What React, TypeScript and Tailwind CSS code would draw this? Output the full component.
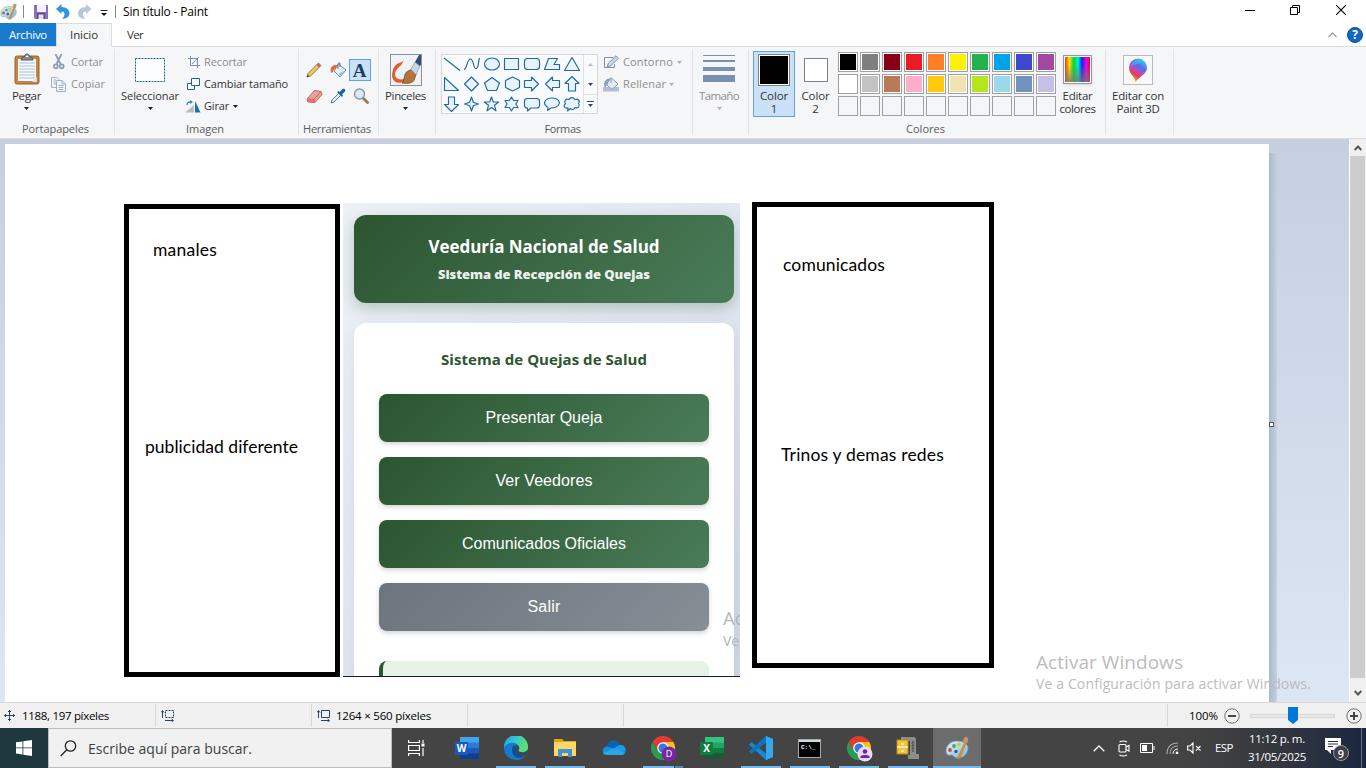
import { useLayoutEffect, useRef, type ReactNode } from "react";

/* Single line of text whose tracking is adjusted so that it fills a given width. */
function Fit({ w, children, className = "" }: { w: number; children: string; className?: string }) {
  const ref = useRef<HTMLSpanElement>(null);
  useLayoutEffect(() => {
    const el = ref.current;
    if (!el) return;
    el.style.letterSpacing = "0px";
    const natural = el.getBoundingClientRect().width;
    el.style.letterSpacing = `${(w - natural) / children.length}px`;
  }, [w, children]);
  return (
    <span ref={ref} className={`inline-block shrink-0 whitespace-nowrap ${className}`}>
      {children}
    </span>
  );
}

function Caret({ className = "text-[#1e1e1e]" }: { className?: string }) {
  return (
    <svg width="5" height="3" viewBox="0 0 5 3" className={`shrink-0 ${className}`}>
      <path d="M0 0H5L2.5 3Z" fill="currentColor" />
    </svg>
  );
}

function Group({ label, labelWidth, className, children }: { label?: string; labelWidth?: number; className: string; children: ReactNode }) {
  return (
    <section className={`flex h-[91px] shrink-0 flex-col ${className}`}>
      <div className="flex h-[72px]">{children}</div>
      <div className="flex h-[19px] items-center justify-center pr-[3px] text-[11px] leading-[19px] text-[#5a5a5a]">
        {label && <Fit w={labelWidth ?? 60}>{label}</Fit>}
      </div>
    </section>
  );
}

function Divider() {
  return <div className="mt-[2px] h-[86px] w-px shrink-0 bg-[#e2e3e4]" />;
}

function PaletteIcon({ size }: { size: number }) {
  return (
    <svg width={size} height={size} viewBox="0 0 24 24" className="shrink-0">
      <defs>
        <linearGradient id="pal" x1="0" y1="0" x2="1" y2="1">
          <stop offset="0" stopColor="#e6f5fd" />
          <stop offset="1" stopColor="#74b9de" />
        </linearGradient>
      </defs>
      <path d="M12 5C5 5 1 10 1 15c0 4 3 5 5 4 2-1 2 3 7 3 6 0 10-5 10-10 0-4-4-7-11-7Z" fill="url(#pal)" stroke="#5d9cc3" strokeWidth=".7" />
      <circle cx="5" cy="14" r="1.9" fill="#e04438" />
      <circle cx="9" cy="10" r="1.9" fill="#4cae45" />
      <circle cx="14" cy="8.5" r="1.9" fill="#f2bd2b" />
      <circle cx="11" cy="15.5" r="1.7" fill="#3d5c72" />
      <path d="M19.8 6 21 7.5 15 22.5 12.5 23.5 13 21Z" fill="#e88b2d" stroke="#b46a1e" strokeWidth=".4" />
      <path d="M18.5 6.5C17 3 20 2 20.5.5c1 1 1.8 1.4 3 1.3C22.5 4 24 6 21.5 7.5Z" fill="#c69766" />
    </svg>
  );
}

function TitleBar() {
  return (
    <header className="flex h-[23px] shrink-0 items-center bg-white">
      <div className="flex w-[17px]"><PaletteIcon size={17} /></div>
      <div className="ml-[6px] h-[13px] w-px bg-[#8a8a8a]" />
      <svg width="14" height="14" viewBox="0 0 14 14" className="ml-[10px]">
        <path d="M0 0H14V14H1L0 13Z" fill="#8a6fc0" />
        <rect x="3" width="9" height="7" fill="#f4f2fa" />
        <path d="M3 8H11V14H3Z" fill="#5a4a86" /><rect x="4.5" y="9.5" width="5" height="4.5" fill="#e4def2" />
      </svg>
      <svg width="14" height="15" viewBox="0 0 14 15" className="ml-[8px]">
        <path d="M0 5 5.500 0V3C11 3 13.500 6 13.500 9.500S10 14.600 6 15C9 12.500 10 7.300 5.500 7.500V10Z" fill="#2f97e0" />
      </svg>
      <svg width="14" height="15" viewBox="0 0 14 15" className="ml-[8px]">
        <path d="M13.500 5 8 0V3C2.500 3 0 6 0 9.500S3.500 14.600 7.500 15C4.500 12.500 3.500 7.300 8 7.500V10Z" fill="#b7c6d9" />
      </svg>
      <svg width="8" height="7" viewBox="0 0 8 7" className="ml-[8px] mt-[3px]">
        <path d="M.5.5H7.500" stroke="#222" /><path d="M1 3H7L4 6Z" fill="#111" />
      </svg>
      <div className="ml-[7px] h-[13px] w-px bg-[#8a8a8a]" />
      <Fit w={85} className="ml-[7px] text-[12px] text-black">Sin título - Paint</Fit>
      <div className="ml-auto flex h-full items-center">
        <svg width="10" height="11" viewBox="0 0 10 11" className="mr-[35px] mt-[-2px]"><path d="M0 5.500H10" stroke="#000" /></svg>
        <svg width="10" height="10" viewBox="0 0 10 10" className="mr-[36px] mt-[-3px]">
          <path d="M.5 2.500H7.500V9.500H.5ZM2.500 2.500V.5H9.500V7.500H7.500" fill="none" stroke="#000" />
        </svg>
        <svg width="10" height="10" viewBox="0 0 10 10" className="mr-[20px] mt-[-3px]"><path d="M0 0 10 10M10 0 0 10" stroke="#000" strokeWidth="1.100" /></svg>
      </div>
    </header>
  );
}

function TabBar() {
  return (
    <nav className="flex h-6 shrink-0 border-b border-[#dadbdc] bg-white text-[11.500px]">
      <div className="flex h-[23px] w-14 items-center justify-center bg-[#1979ca] text-white"><Fit w={38}>Archivo</Fit></div>
      <div className="flex h-6 w-14 items-center justify-center border-x border-t border-[#dadbdc] bg-[#f5f6f7] pb-[2px] text-[#333]"><Fit w={28}>Inicio</Fit></div>
      <div className="flex h-[23px] w-[46px] items-center justify-center text-[#333]"><Fit w={16}>Ver</Fit></div>
      <div className="ml-auto flex h-[23px] items-center">
        <svg width="9" height="6" viewBox="0 0 9 6" className="mr-[10px]"><path d="M.5 5 4.500 1 8.500 5" fill="none" stroke="#a0a0a0" strokeWidth="1.400" /></svg>
        <span className="mr-[3px] flex size-4 items-center justify-center rounded-full border border-[#0d4f93] bg-[#0f68c3] text-[12px] font-bold leading-none text-white">?</span>
      </div>
    </nav>
  );
}

function ClipboardGroup() {
  return (
    <Group label="Portapapeles" labelWidth={67} className="w-[114px]">
      <div className="flex w-[53px] flex-col items-center pt-[6px]">
        <svg width="26" height="32" viewBox="0 0 26 32" className="ml-[1px]">
          <rect x="1" y="3" width="24" height="28" rx="2" fill="#c58440" stroke="#9a622b" />
          <path d="M4 6H22V28H4Z" fill="#f7fafc" />
          <path d="M5 10H21M5 13H21M5 16H21M5 19H21M5 22H21M5 25H21" stroke="#a9c0d2" />
          <path d="M7 7 8.500 4H10.500C10.500 0 15.500 0 15.500 4H17.500L19 7Z" fill="#888f96" stroke="#4f565c" />
          <path d="M11.500 4a1.500 1.500 0 0 1 3 0" fill="#fff" />
          <path d="M18 29 23 24V29Z" fill="#d7dee3" />
        </svg>
        <Fit w={29} className="mt-[3px] text-[11.500px] leading-4 text-[#333]">Pegar</Fit>
        <Caret className="mt-[3px] text-[#1e1e1e]" />
      </div>
      <div className="-ml-px flex flex-col pt-[4px] text-[11px] text-[#8d8d8d]">
        <div className="flex h-[22px] items-center">
          <svg width="12" height="16" viewBox="0 0 12 16" className="ml-[1px] mr-[6px]" fill="none" stroke="#8c9ab4" strokeWidth="1.700">
            <path d="M2.500 0 7.500 10M8.500 0 3.500 10" /><circle cx="2.800" cy="12.300" r="2" /><circle cx="8.700" cy="12.300" r="2" />
          </svg>
          <Fit w={32}>Cortar</Fit>
        </div>
        <div className="flex h-[22px] items-center">
          <svg width="15" height="15" viewBox="0 0 15 15" className="mr-[5px] -ml-px" fill="#f3f5f9" stroke="#a4b0c6">
            <path d="M.5.5H6L8.500 3V10.500H.5ZM2.500 3H5M2.500 5H6.500M2.500 7H6.500" /><path d="M5.500 3.500H11L14.500 7V14.500H5.500ZM11 3.500V7H14.500M7.500 8.500H12.500M7.500 10.500H12.500M7.500 12.500H12.500" />
          </svg>
          <Fit w={34}>Copiar</Fit>
        </div>
      </div>
    </Group>
  );
}

function ImageGroup() {
  return (
    <Group label="Imagen" labelWidth={38} className="w-[183px]">
      <div className="flex w-[70px] flex-col items-center pt-[11px]">
        <svg width="30" height="24" viewBox="0 0 30 24"><rect x=".5" y=".5" width="29" height="23" fill="#fbfdfe" stroke="#1d5f9e" strokeDasharray="2 1" /></svg>
        <Fit w={58} className="mt-[6px] text-[11px] leading-4 text-[#333]">Seleccionar</Fit>
        <Caret className="mt-[3px] text-[#1e1e1e]" />
      </div>
      <div className="flex flex-col pl-[2px] pt-[4px] text-[11px] text-[#333]">
        <div className="flex h-[22px] items-center text-[#8d8d8d]">
          <svg width="12" height="12" viewBox="0 0 12 12" className="ml-px mr-[4px]" fill="none" stroke="#7e8fae"><path d="M2.500 0V9.500H12M0 2.500H9.500V12M4 8 11 1" /></svg>
          <Fit w={43}>Recortar</Fit>
        </div>
        <div className="flex h-[22px] items-center">
          <svg width="13" height="12" viewBox="0 0 13 12" className="mr-[4px]" fill="#fff" stroke="#1d5f9e"><path d="M.5 5.500H7.500V11.500H.5Z" /><path d="M4.500.5H12.500V7.500H4.500Z" /></svg>
          <Fit w={84}>Cambiar tamaño</Fit>
        </div>
        <div className="flex h-[22px] items-center">
          <svg width="16" height="13" viewBox="0 0 16 13" className="-ml-[2px] mr-[3px]">
            <path d="M9 5V12.500H0Z" fill="#b7bec6" /><path d="M10 1V12.500H15.500Z" fill="#1d6fa9" /><path d="M2 5C2 2 4 2 6 2" fill="none" stroke="#2f86cc" strokeWidth="1.300" /><path d="M5 0 8 2 5 4Z" fill="#2f86cc" />
          </svg>
          <Fit w={25}>Girar</Fit>
          <Caret className="ml-1 text-[#1e1e1e]" />
        </div>
      </div>
    </Group>
  );
}

function ToolsGroup() {
  return (
    <Group label="Herramientas" labelWidth={68} className="w-[79px]">
      <div className="mt-[11px] grid h-[52px] grid-cols-[24px_24px_24px] grid-rows-[24px_28px] place-items-center pl-[3px]">
        <svg width="16" height="16" viewBox="0 0 16 16"><path d="M2 11.500 11 2.500 13.500 5 4.500 14 1 15Z" fill="#f5c65c" stroke="#8a6a35" strokeWidth=".9" /><path d="M11 2.500 12.500 1 15 3.500 13.500 5Z" fill="#d9705b" stroke="#93503d" strokeWidth=".7" /><path d="M1 15 1.700 12.800 3 14.400Z" fill="#222" /></svg>
        <svg width="17" height="16" viewBox="0 0 17 16"><path d="M8.500 2 16 8 10 15 4 9Z" fill="#e6f0f8" stroke="#54799b" strokeWidth=".9" /><path d="M8 7V2Q8 .5 10 1V5" fill="none" stroke="#54799b" strokeWidth=".9" /><path d="M8 3.500C3 1.500 0 5 1 10 2 12 3 10 3.500 8L7 5Z" fill="#ec642d" /><path d="M9 11.500 14.500 8.500 10 14Z" fill="#8fbce0" /></svg>
        <div className="ml-[-5px] flex h-[22px] w-[22px] items-center justify-center border border-[#62a2e4] bg-[#c9e0f7]">
          <span className="font-['Liberation_Serif',serif] text-[19px] font-bold leading-none text-[#1d3c61]">A</span>
        </div>
        <svg width="17" height="15" viewBox="0 0 17 15"><path d="M1 10 8.500 1.500 15 2.500 16 5.500 9 13.500 2 13Z" fill="#f0a09b" stroke="#c4625e" /><path d="M1 10 8 10.300 15 2.500M8 10.300 9 13.500" fill="none" stroke="#c4625e" strokeWidth=".9" /><path d="M1.500 10.500 8 10.800 8.500 13 2.500 12.700Z" fill="#e06f6a" /></svg>
        <svg width="16" height="16" viewBox="0 0 16 16"><path d="M9 5 11 7 4 14 1 15 2 12Z" fill="#dcebf5" stroke="#5480a3" /><path d="M7 4 12 9 13 7.500 12 6.500 15 3.500C16 1.500 14.500 0 12.500 1L9.500 4 8.500 3Z" fill="#21659d" /></svg>
        <svg width="16" height="16" viewBox="0 0 16 16" className="-ml-[3px]"><path d="M10 10 14.500 14.500" stroke="#96745a" strokeWidth="2.700" strokeLinecap="round" /><circle cx="6.500" cy="6" r="5" fill="#dceaf3" stroke="#8a98a3" strokeWidth="1.400" /></svg>
      </div>
    </Group>
  );
}

function BrushGroup() {
  return (
    <Group className="w-14">
      <div className="flex w-[53px] flex-col items-center pt-[7px]">
        <svg width="32" height="32" viewBox="0 0 32 32">
          <rect x=".5" y=".5" width="31" height="31" fill="#f0f3f5" stroke="#8f9396" />
          <path d="M13.500 6C13 12 5 14 5 20 5 25 10 27 17 24 15 28 11 29.500 7 28.500 2 27 1 21 3 16 5 11 12 10 13.500 6Z" fill="#e65a2a" />
          <path d="M12 8C7 9 3 12 3 18 4 14 9 12 12 8Z" fill="#e65a2a" />
          <path d="M16.500 18 21 15.500 26 20.500 24 26.500C21 30 16 29.500 12 29 15 27 13 22 16.500 18Z" fill="#b5733b" stroke="#7b4a20" strokeWidth=".8" />
          <path d="M21 15.500 25 8 30 12 26 20.500Z" fill="#ccd8e0" stroke="#849bac" strokeWidth=".7" /><path d="M25 8 29 1H31V10.500L30 12Z" fill="#2d4d7c" />
        </svg>
        <Fit w={41} className="mt-[2px] text-[11.500px] leading-4 text-[#333]">Pinceles</Fit>
        <Caret className="mt-[3px] text-[#1e1e1e]" />
      </div>
    </Group>
  );
}

const shapes = [
  "M2 4 18 16.500",
  "M2 15.500C5 15 5 5 8.500 5S11 15 14 14.500 16 8 17.500 4",
  "M2.500 10a7.500 6 0 1 0 15 0a7.500 6 0 1 0-15 0Z",
  "M2.500 4.500H16.500V15.500H2.500Z",
  "M5.500 4.500H14.500Q17.500 4.500 17.500 7.500V12.500Q17.500 15.500 14.500 15.500H5.500Q2.500 15.500 2.500 12.500V7.500Q2.500 4.500 5.500 4.500Z",
  "M2.500 15.500 6.500 4.500H15.500L12 10.500H17.500V15.500Z",
  "M10 3.500 17.500 16.500H2.500Z",
  "M2.500 3.500V16.500H16.500Z",
  "M9.500 3 16.500 10 9.500 17 2.500 10Z",
  "M10 3.500 17.500 9 14.500 16.500H5.500L2.500 9Z",
  "M10.500 3 17.500 6.500V13.500L10.500 17 3.500 13.500V6.500Z",
  "M2.500 6.500H9.500V3L16.500 10 9.500 17V13.500H2.500Z",
  "M17.500 6.500H10.500V3L3.500 10 10.500 17V13.500H17.500Z",
  "M6.500 17V9.500H3L10 2.500 17 9.500H13.500V17Z",
  "M6.500 3V10.500H2.500L9.500 17.500 16.500 10.500H12.500V3Z",
  "M9.500 3 11.300 8.200 16.500 10 11.300 11.800 9.500 17 7.700 11.800 2.500 10 7.700 8.200Z",
  "M9.500 3 11.300 8H16.800L12.500 11.300 14 16.800 9.500 13.500 5 16.800 6.500 11.300 2.200 8H7.700Z",
  "M9.500 3 11.600 6.500H16L13.900 10 16 13.500H11.600L9.500 17 7.400 13.500H3L5.100 10 3 6.500H7.400Z",
  "M5.500 4.500H14.500Q17.500 4.500 17.500 7V11.500Q17.500 14 14.500 14H9L5.500 17V14Q2.500 14 2.500 11.500V7Q2.500 4.500 5.500 4.500Z",
  "M6 13.500C-1 9 4 4 10 4S21 9 14 13C12 14 10 14 9 14L5.500 16.500Z",
  "M6 14C2 15 1 11 3.500 10 1.500 7 4 4 7 5.500 8 3 12 3 12.500 5.500 16 4 18.500 7 16.500 9.500 18.500 12 16 15 13 13.500 12 16 9.500 16 8.500 14.500L5.500 17Z",
];

function ShapesGroup() {
  return (
    <Group label="Formas" labelWidth={36} className="w-[256px]">
      <div className="ml-[5px] mt-[7px] flex h-[60px] w-[157px] border border-[#d3d7db] bg-[#f8fafb]">
        <div className="-mt-px grid h-[60px] w-[141px] shrink-0 grid-cols-[repeat(7,20px)] grid-rows-[repeat(3,20px)]">
          {shapes.map((d, i) => (
            <svg key={i} width="20" height="20" viewBox="0 0 20 20"><path d={d} fill={i < 2 ? "none" : "#e9f4fa"} stroke="#2269a6" strokeWidth="1.150" strokeLinejoin="round" /></svg>
          ))}
        </div>
        <div className="flex w-[14px] flex-col border-l border-[#dfe2e5]">
          <div className="flex h-[19px] items-center justify-center"><Caret className="rotate-180 text-[#b8bcc0]" /></div>
          <div className="flex h-5 items-center justify-center"><Caret className="text-[#33475e]" /></div>
          <div className="flex h-[19px] flex-col items-center justify-center gap-[2px] border-t border-[#dfe2e5]"><div className="h-px w-[7px] bg-[#33475e]" /><Caret className="text-[#33475e]" /></div>
        </div>
      </div>
      <div className="flex flex-col pl-[5px] pt-[4px] text-[11px] text-[#8d8d8d]">
        <div className="flex h-[22px] items-center">
          <svg width="17" height="14" viewBox="0 0 17 14" className="mr-[3px]"><path d="M10 2.500H1.500V12.500H11.500V9" fill="#fbfcfd" stroke="#7e8fae" /><path d="M4 12 5.500 8 13 .8 15.500 3.300 8 10.500Z" fill="#cfd7e5" stroke="#7e8fae" /></svg>
          <Fit w={50}>Contorno</Fit><Caret className="ml-[4px] text-[#b0b0b0]" />
        </div>
        <div className="flex h-[22px] items-center">
          <svg width="17" height="16" viewBox="0 0 17 16" className="mr-[3px]"><rect y="11" width="16" height="4.500" fill="#afbfd5" /><path d="M8.500 2 15 8 9 13.500 3 8Z" fill="#e4eaf2" stroke="#8799b5" /><path d="M8 7V1.500M7 3C2 3 1 7 2 11L5 7" fill="#91a3bd" stroke="#8799b5" /></svg>
          <Fit w={43}>Rellenar</Fit><Caret className="ml-[3px] text-[#b0b0b0]" />
        </div>
      </div>
    </Group>
  );
}

function SizeGroup() {
  return (
    <Group className="w-[55px]">
      <div className="flex w-[52px] flex-col items-center pt-[8px]">
        <div className="flex w-8 flex-col">
          <div className="h-px bg-[#7b8fb1]" /><div className="mt-[4px] h-[2px] bg-[#7b8fb1]" /><div className="mt-[5px] h-[4px] bg-[#7b8fb1]" /><div className="mt-[4px] h-[7px] bg-[#7b8fb1]" />
        </div>
        <Fit w={40} className="mt-[6px] text-[11.500px] leading-4 text-[#8d8d8d]">Tamaño</Fit>
        <Caret className="mt-[3px] text-[#b0b0b0]" />
      </div>
    </Group>
  );
}

const swatches = [
  "bg-black", "bg-[#7f7f7f]", "bg-[#880015]", "bg-[#ed1c24]", "bg-[#ff7f27]", "bg-[#fff200]", "bg-[#22b14c]", "bg-[#00a2e8]", "bg-[#3f48cc]", "bg-[#a349a4]",
  "bg-white", "bg-[#c3c3c3]", "bg-[#b97a57]", "bg-[#ffaec9]", "bg-[#ffc90e]", "bg-[#efe4b0]", "bg-[#b5e61d]", "bg-[#99d9ea]", "bg-[#7092be]", "bg-[#c8bfe7]",
];

function ColorsGroup() {
  return (
    <Group label="Colores" labelWidth={39} className="w-[356px]">
      <div className="ml-1 mt-1 flex h-[66px] w-[42px] flex-col items-center border border-[#62a2e4] bg-[#c9e0f7] pt-[2px] text-[11.500px] leading-[13px] text-[#333]">
        <div className="size-8 shrink-0 border border-[#808080] bg-white p-px"><div className="size-7 bg-black" /></div>
        <Fit w={28} className="mt-[3px]">Color</Fit><span>1</span>
      </div>
      <div className="flex w-[41px] flex-col items-center pt-[11px] text-[11.500px] leading-[13px] text-[#333]">
        <div className="size-6 shrink-0 border border-[#808080] bg-white" />
        <Fit w={28} className="mt-[7px]">Color</Fit><span>2</span>
      </div>
      <div className="ml-[2px] mt-[5px] grid h-16 grid-cols-[repeat(10,20px)] gap-[2px]">
        {swatches.map((c) => (
          <div key={c} className="size-5 border border-[#a0a0a0] bg-white p-px"><div className={`size-4 ${c}`} /></div>
        ))}
        {Array.from({ length: 10 }, (_, i) => <div key={i} className="size-5 border border-[#a0a0a0]" />)}
      </div>
      <div className="flex w-[43px] flex-col items-center pt-[8px] text-[11.500px] leading-[13px] text-[#333]">
        <div className="size-[29px] shrink-0 border border-[#999] bg-white p-px shadow-sm">
          <div className="size-full bg-[linear-gradient(to_top,#777c_0%,transparent_70%),linear-gradient(to_right,#e32_0%,#fd0_18%,#0d2_35%,#0ed_52%,#12e_68%,#e0e_85%,#e02_100%)]" />
        </div>
        <Fit w={30} className="mt-[5px]">Editar</Fit><Fit w={36}>colores</Fit>
      </div>
    </Group>
  );
}

function Paint3DGroup() {
  return (
    <Group className="w-[67px]">
      <div className="flex w-[64px] flex-col items-center pt-[8px] text-[11.500px] leading-[13px] text-[#333]">
        <div className="flex size-[30px] shrink-0 items-center justify-center border border-[#bbb] bg-[#f8f8f8]">
          <svg width="20" height="25" viewBox="0 0 20 25">
            <defs>
              <linearGradient id="drop" x1=".8" y1="0" x2=".3" y2="1"><stop offset="0" stopColor="#28dfed" /><stop offset=".35" stopColor="#5b6be8" /><stop offset=".55" stopColor="#bd4cbd" /><stop offset=".72" stopColor="#ea3c4c" /><stop offset="1" stopColor="#ffc52c" /></linearGradient>
            </defs>
            <path d="M7 24.500C9 20 1 17 1 9.500A9 9 0 0 1 19 9.500C19 16 12 18 7 24.500Z" fill="url(#drop)" />
            <path d="M3 7C6 0 12 1 15 4 10 4 8 8 3 7Z" fill="#35bff0" opacity=".65" />
          </svg>
        </div>
        <Fit w={52} className="mt-[4px]">Editar con</Fit><Fit w={43}>Paint 3D</Fit>
      </div>
    </Group>
  );
}

function MenuButton({ children, w, gray }: { children: string; w: number; gray?: boolean }) {
  return (
    <div className={`flex h-12 w-full shrink-0 items-center justify-center rounded-lg font-['Liberation_Sans',sans-serif] text-[16px] text-white shadow-[0_2px_5px_rgba(0,0,0,0.18)] ${gray ? "bg-linear-135 from-[#6c757d] to-[#868e96]" : "bg-linear-135 from-[#2c5530] to-[#4a7c59]"}`}>
      <Fit w={w}>{children}</Fit>
    </div>
  );
}

function WebCapture() {
  return (
    <div className="relative flex h-full w-full flex-col overflow-hidden border-b border-[#141d33] bg-linear-135 from-[#edf1f6] via-[#e2e7f1] to-[#cfd8e6] pl-[11px] pr-[6px] pt-3">
      <div className="flex h-[88px] shrink-0 flex-col items-center rounded-xl bg-linear-135 from-[#2c5530] to-[#4a7c59] pt-[20px] text-white shadow-[0_5px_15px_rgba(44,85,48,0.28)]">
        <Fit w={231} className="text-[17px] font-bold leading-6">Veeduría Nacional de Salud</Fit>
        <Fit w={212} className="mt-[4px] text-[13px] font-extrabold leading-[22px] opacity-90">Sistema de Recepción de Quejas</Fit>
      </div>
      <div className="mt-5 flex h-[370px] shrink-0 flex-col items-center rounded-t-xl bg-white px-[25px] shadow-[0_5px_15px_rgba(0,0,0,0.08)]">
        <Fit w={206} className="mt-[24px] text-[15px] font-bold leading-6 text-[#2c5530]">Sistema de Quejas de Salud</Fit>
        <div className="mt-[23px] flex w-full flex-col gap-[15px]">
          <MenuButton w={117}>Presentar Queja</MenuButton>
          <MenuButton w={97}>Ver Veedores</MenuButton>
          <MenuButton w={164}>Comunicados Oficiales</MenuButton>
          <MenuButton w={33} gray>Salir</MenuButton>
        </div>
        <div className="mt-[30px] h-10 w-full shrink-0 rounded-lg border-l-4 border-[#2c5530] bg-[#e8f3e8]" />
      </div>
      <div className="absolute left-[380px] top-[403px] w-[17px] overflow-hidden whitespace-nowrap text-[#b4b6ba]">
        <div className="text-[18.500px] leading-6">Ac</div>
        <div className="mt-[1px] text-[14px] leading-5">Ve</div>
      </div>
    </div>
  );
}

function Workspace() {
  return (
    <main className="flex h-[563px] shrink-0">
      <div className="relative h-full w-[1349px] overflow-hidden bg-linear-to-b from-[#c5cfe0] to-[#dce6f4] font-['Open_Sans','Noto_Sans',sans-serif]">
        <div className="absolute bottom-0 left-[1269px] top-[14px] w-2 bg-linear-to-r from-[#a9b8cc] to-[#c5d1e1]" />
        <div className="absolute bottom-0 left-[5px] top-[5px] w-[1264px] bg-white text-black">
          <div className="absolute left-[119px] top-[60px] h-[473px] w-[216px] border-[5px] border-black" />
          <div className="absolute left-[148px] top-[94px] font-[Lato,sans-serif] text-[17.500px] leading-6"><Fit w={64}>manales</Fit></div>
          <div className="absolute left-[140px] top-[291px] font-[Lato,sans-serif] text-[17.500px] leading-6"><Fit w={153}>publicidad diferente</Fit></div>
          <div className="absolute left-[338px] top-[59px] h-[474px] w-[397px]"><WebCapture /></div>
          <div className="absolute left-[747px] top-[58px] h-[466px] w-[242px] border-[5px] border-black" />
          <div className="absolute left-[778px] top-[109px] font-[Lato,sans-serif] text-[17.500px] leading-6"><Fit w={102}>comunicados</Fit></div>
          <div className="absolute left-[776px] top-[299px] font-[Lato,sans-serif] text-[17.500px] leading-6"><Fit w={163}>Trinos y demas redes</Fit></div>
        </div>
        <div className="absolute left-[1269px] top-[283px] size-[5px] border border-[#555] bg-white" />
        <div className="absolute left-[1036px] top-[511px] flex flex-col text-[#bcbcbc]">
          <Fit w={147} className="self-start text-[19px] leading-6">Activar Windows</Fit>
          <Fit w={275} className="self-start text-[14px] leading-[20px]">Ve a Configuración para activar Windows.</Fit>
        </div>
      </div>
      <div className="flex w-[17px] flex-col items-center border-l border-white bg-[#f0f0f0]">
        <div className="flex h-[17px] shrink-0 items-center"><svg width="8" height="6" viewBox="0 0 8 6"><path d="M.7 5 4 1.500 7.300 5" fill="none" stroke="#555" strokeWidth="2" /></svg></div>
        <div className="mr-px h-[522px] w-[15px] shrink-0 bg-[#cdcdcd]" />
        <div className="flex h-[24px] shrink-0 items-center pt-[6px]"><svg width="8" height="6" viewBox="0 0 8 6"><path d="M.7 1 4 4.500 7.300 1" fill="none" stroke="#555" strokeWidth="2" /></svg></div>
      </div>
    </main>
  );
}

function ResizeGlyph({ dashed }: { dashed?: boolean }) {
  return (
    <svg width="13" height="12" viewBox="0 0 13 12" fill="none" stroke="#2b4463">
      <path d="M4.500.5H12.500V7.500H4.500Z" strokeDasharray={dashed ? "2 1" : undefined} /><path d="M1.500 8V1M0 2.500 1.500.5 3 2.500M4 10.500H12M10.500 9 12.500 10.500 10.500 12" />
    </svg>
  );
}

function StatusBar() {
  return (
    <div className="flex h-[26px] shrink-0 items-center border-t border-[#d7d7d7] bg-[#f0f0f0] text-[11.500px] text-black">
      <div className="flex h-[23px] w-[156px] items-center border-r border-[#d7d7d7] pl-1">
        <svg width="11" height="11" viewBox="0 0 11 11" className="mr-[7px]" fill="none" stroke="#2b4463"><path d="M5.500 0V11M0 5.500H11M4 2 5.500.5 7 2M4 9 5.500 10.500 7 9M2 4 .5 5.500 2 7M9 4 10.500 5.500 9 7" /></svg>
        <Fit w={87}>1188, 197 píxeles</Fit>
      </div>
      <div className="flex h-[23px] w-[156px] items-center border-r border-[#d7d7d7] pl-[5px]"><ResizeGlyph dashed /></div>
      <div className="flex h-[23px] w-[156px] items-center border-r border-[#d7d7d7] pl-[5px]"><ResizeGlyph /><Fit w={95} className="ml-[6px]">1264 × 560 píxeles</Fit></div>
      <div className="h-[23px] w-[156px] border-r border-[#d7d7d7]" />
      <div className="ml-auto flex h-[23px] w-[199px] items-center border-l border-[#d7d7d7] pl-[21px]">
        <Fit w={29}>100%</Fit>
        <svg width="16" height="16" viewBox="0 0 16 16" className="ml-[6px]"><circle cx="8" cy="8" r="7.200" fill="#f0f0f0" stroke="#707070" /><path d="M4 8H12" stroke="#444" strokeWidth="2" /></svg>
        <div className="relative ml-[10px] h-[4px] w-[85px] border border-[#d6d6d6] bg-[#e7eaea]">
          <svg width="10" height="17" viewBox="0 0 10 17" className="absolute -top-[8px] left-[37px]"><path d="M0 0H10V13L5 17 0 13Z" fill="#0078d7" /></svg>
        </div>
        <svg width="16" height="16" viewBox="0 0 16 16" className="ml-[11px]"><circle cx="8" cy="8" r="7.200" fill="#f0f0f0" stroke="#707070" /><path d="M4 8H12M8 4V12" stroke="#444" strokeWidth="2" /></svg>
      </div>
    </div>
  );
}

function TaskItem({ children, line, active, className = "w-[49px]" }: { children: ReactNode; line?: boolean; active?: boolean; className?: string }) {
  return (
    <div className={`flex h-10 shrink-0 flex-col items-center ${active ? "bg-[#6c6c6c]" : ""} ${className}`}>
      <div className="flex h-[38px] items-center pt-[2px]">{children}</div>
      {(line || active) && <div className={`h-[2px] bg-[#76b9ed] ${active ? "w-12" : "w-10"}`} />}
    </div>
  );
}

function OfficeIcon({ letter, colors, dark }: { letter: string; colors: [string, string, string, string]; dark: string }) {
  return (
    <svg width="24" height="22" viewBox="0 0 24 22">
      <path d="M5 0H24V6H5Z" fill={colors[0]} /><path d="M5 5.500H24V11H5Z" fill={colors[1]} /><path d="M5 11H24V16.500H5Z" fill={colors[2]} /><path d="M5 16.500H24V22H5Z" fill={colors[3]} />
      <rect y="5" width="13" height="13" rx="1" fill={dark} />
      <text x="6.500" y="15" textAnchor="middle" fontSize="10" fontWeight="700" fill="#fff" fontFamily="Open Sans">{letter}</text>
    </svg>
  );
}

function ChromeIcon({ children }: { children: ReactNode }) {
  return (
    <svg width="26" height="26" viewBox="0 0 26 26" className="ml-[2px] mt-px">
      <path d="M1.600 6A12 12 0 0 1 22.400 6H12L7 15Z" fill="#e33b2e" />
      <path d="M22.400 6A12 12 0 0 1 12 24L17.200 15 12 6Z" fill="#fbc116" />
      <path d="M1.600 6A12 12 0 0 0 12 24L17.200 15H6.800Z" fill="#269d4f" />
      <circle cx="12" cy="12" r="5.800" fill="#fff" /><circle cx="12" cy="12" r="4.500" fill="#3478e6" />
      {children}
    </svg>
  );
}

function TaskBar() {
  return (
    <footer className="flex h-10 shrink-0 bg-[linear-gradient(to_right,#444_0,#444_1180px,#35383e_1270px,#1b2740_1366px)] font-['Open_Sans','Noto_Sans',sans-serif]">
      <div className="flex w-12 items-center justify-center bg-[#1f373f]">
        <svg width="16" height="16" viewBox="0 0 16 16" fill="#fff"><path d="M0 2.300 6.500 1.400V7.500H0ZM7.300 1.200 16 0V7.500H7.300ZM0 8.300H6.500V14.500L0 13.600ZM7.300 8.300H16V16L7.300 14.700Z" /></svg>
      </div>
      <div className="flex w-[344px] items-center border border-[#bdbdbd] bg-[#f1f1f1] text-[14px] text-[#404040]">
        <svg width="17" height="17" viewBox="0 0 17 17" className="ml-[11px] mr-[11px]" fill="none" stroke="#222" strokeWidth="1.300"><circle cx="10.500" cy="6" r="5.200" /><path d="M6.800 9.800.7 16" /></svg>
        <Fit w={164}>Escribe aquí para buscar.</Fit>
      </div>
      <TaskItem className="w-[51px]">
        <svg width="17" height="16" viewBox="0 0 17 16" className="-ml-[3px]" fill="none" stroke="#fff" strokeWidth="1.200"><path d="M.6 0V2.500H11.400V0M.6 16V13.500H11.400V16M.6 5.500H11.400V10.500H.6ZM15 0V3M15 8V16" /><path d="M13.500 5H16.500" strokeWidth="3" /></svg>
      </TaskItem>
      <TaskItem className="w-12"><OfficeIcon letter="W" colors={["#41a5ee", "#2b7cd3", "#185abd", "#103f91"]} dark="#185abd" /></TaskItem>
      <TaskItem line>
        <svg width="24" height="24" viewBox="0 0 24 24">
          <defs><linearGradient id="edge" x1="0" y1="0" x2="1" y2=".3"><stop offset="0" stopColor="#229ee3" /><stop offset=".5" stopColor="#31c8d5" /><stop offset="1" stopColor="#5be06c" /></linearGradient></defs>
          <circle cx="12" cy="12" r="12" fill="#137ccf" />
          <path d="M0 11A12 12 0 0 1 24 11C24 17 17 18 14.500 15.500 13 14 16 14 15 11 13 6 5 5 0 11Z" fill="url(#edge)" />
          <path d="M8 14C8 9 12 9 12.500 9 10 12 13 19 21.500 18.500 17 24 8 23 8 14Z" fill="#104f94" />
          <path d="M12.500 9C16 9.500 15.500 13 14.500 14 14 16 19 18 24 14L22 19C15 20 10 16 12.500 9Z" fill="#444" />
        </svg>
      </TaskItem>
      <TaskItem line>
        <svg width="22" height="20" viewBox="0 0 22 20"><path d="M0 1H8L10 3H22V18H0Z" fill="#e5a50f" /><path d="M0 4H22V18H0Z" fill="#ffd766" /><path d="M4 19V11H18V19H14V15H8V19Z" fill="#3d94d4" /></svg>
      </TaskItem>
      <TaskItem>
        <svg width="24" height="16" viewBox="0 0 24 16"><path d="M6 15C-1 15-1 7 5 6.500 7-1 16-1 17.500 5 22 4.500 24 8 23.500 11 23 15 19 15 19 15Z" fill="#1490df" /><path d="M5 6.500C7-1 16-1 17.500 5L12 8.500Z" fill="#0364b8" /><path d="M1 13 12 8.500 17.500 5C22 4.500 24 8 23.500 11Z" fill="#1c9ce8" /><path d="M12 8.500 23 13C22 15 19 15 19 15H6C3 15 1.500 14 1 13Z" fill="#28a8ea" /></svg>
      </TaskItem>
      <div className="relative">
        <TaskItem line><ChromeIcon><circle cx="18" cy="18" r="7.500" fill="#7627a9" /><text x="18" y="21.300" textAnchor="middle" fontSize="9" fill="#fff" fontFamily="Open Sans">D</text></ChromeIcon></TaskItem>
        <div className="absolute bottom-0 left-[36px] h-[2px] w-[9px] border-l border-[#444] bg-[#5587af]" />
      </div>
      <TaskItem><OfficeIcon letter="X" colors={["#33c481", "#21a366", "#107c41", "#185c37"]} dark="#107c41" /></TaskItem>
      <TaskItem line>
        <svg width="24" height="24" viewBox="0 0 24 24"><path d="M17 0 24 3V21L17 24 0 8.500 2.500 6 17 17.500Z" fill="#168bd1" /><path d="M17 6.500 2.500 18 0 15.500 17 0Z" fill="#0877bd" /><path d="M17 0 24 3V21L17 24Z" fill="#33a8ee" /></svg>
      </TaskItem>
      <TaskItem line>
        <svg width="23" height="19" viewBox="0 0 23 19"><rect x=".5" y=".5" width="22" height="18" fill="#050505" stroke="#aaa" /><path d="M1 1H22V3H1Z" fill="#d2dce3" /><text x="3" y="10" fontSize="6" fontWeight="700" fill="#fff" fontFamily="Liberation Mono">C:\_</text></svg>
      </TaskItem>
      <TaskItem line><ChromeIcon><circle cx="18" cy="18" r="7.500" fill="#eadcf8" /><circle cx="18" cy="15.500" r="2.300" fill="#6d28a6" /><path d="M13.500 22V20.500C14 18.500 22 18.500 22.500 20.500V22Z" fill="#6d28a6" /></ChromeIcon></TaskItem>
      <TaskItem line>
        <svg width="24" height="23" viewBox="0 0 24 23"><path d="M5 0H18Q20 0 20 3V17H23V22H12V18H14V4H5Z" fill="#8b8d8e" /><path d="M17 4V15M15.500 6H19M15.500 9H19M15.500 12H19" stroke="#444" strokeWidth="1.200" strokeDasharray="2 1" /><rect x="1" y="3" width="11" height="14" fill="#f4c33d" stroke="#b98817" /><path d="M1 10H12M5 7H8M5 14H8" stroke="#fff2b8" strokeWidth="1.500" /></svg>
      </TaskItem>
      <TaskItem active className="ml-px w-12"><PaletteIcon size={24} /></TaskItem>
      <div className="ml-auto flex items-center text-white">
        <svg width="12" height="7" viewBox="0 0 12 7" fill="none" stroke="#fff" strokeWidth="1.300"><path d="M.7 6.300 6 1 11.300 6.300" /></svg>
        <svg width="12" height="17" viewBox="0 0 12 17" className="ml-[13px]" fill="none" stroke="#fff" strokeWidth="1.100"><rect x="1" y="4.500" width="7" height="7.500" rx="1" /><path d="M8 7 11 5.500V11L8 9.500M1.500 2Q5 0 9 2M1.500 15Q5 17 9 15" /></svg>
        <svg width="15" height="10" viewBox="0 0 15 10" className="ml-[10px]"><path d="M.5.5H12.500V9.500H.5ZM14 3V7" fill="none" stroke="#fff" /><rect x="2" y="2" width="5" height="6" fill="#fff" /></svg>
        <svg width="13" height="12" viewBox="0 0 13 12" className="ml-[11px]" fill="none"><path d="M1 12C1 5 5 1 12 1M4 12C4 7 7 4 12 4" stroke="#aaa" strokeWidth="1.200" /><path d="M7 12C7 9 9 7 12 7" stroke="#fff" /><circle cx="11" cy="11" r="1.400" fill="#fff" /></svg>
        <svg width="15" height="12" viewBox="0 0 15 12" className="ml-[8px]" fill="none" stroke="#fff" strokeWidth="1.100"><path d="M.6 4H3L6 1V11L3 8H.6ZM9 4 13.500 8.500M13.500 4 9 8.500" /></svg>
        <Fit w={18} className="ml-[13px] text-[11.500px]">ESP</Fit>
        <div className="ml-[15px] flex w-[58px] flex-col items-center text-[11.500px] leading-[18px]"><Fit w={56}>11:12 p. m.</Fit><Fit w={58}>31/05/2025</Fit></div>
        <div className="relative ml-[19px] h-[26px] w-[24px]">
          <svg width="16" height="16" viewBox="0 0 16 16" className="mt-[3px]"><path d="M0 0H16V12H6V16L2 12H0Z" fill="#fff" /><path d="M3 3.500H13M3 6H13M3 8.500H8" stroke="#263247" /></svg>
          <span className="absolute bottom-0 right-0 flex size-4 items-center justify-center rounded-full border border-[#999] bg-[#3b3f47] text-[11px] font-semibold leading-none">9</span>
        </div>
        <div className="ml-[12px] mr-[4px] h-10 w-px bg-[#6d7480]" />
      </div>
    </footer>
  );
}

export default function App() {
  return (
    <div className="flex h-[768px] w-[1366px] flex-col overflow-hidden bg-[#f5f6f7] font-['Open_Sans','Noto_Sans',sans-serif]">
      <TitleBar />
      <TabBar />
      <div className="flex h-[92px] shrink-0 border-b border-[#dadbdc] bg-[#f5f6f7]">
        <ClipboardGroup /><Divider />
        <ImageGroup /><Divider />
        <ToolsGroup /><Divider />
        <BrushGroup /><Divider />
        <ShapesGroup /><Divider />
        <SizeGroup /><Divider />
        <ColorsGroup /><Divider />
        <Paint3DGroup /><Divider />
      </div>
      <Workspace />
      <StatusBar />
      <TaskBar />
    </div>
  );
}
